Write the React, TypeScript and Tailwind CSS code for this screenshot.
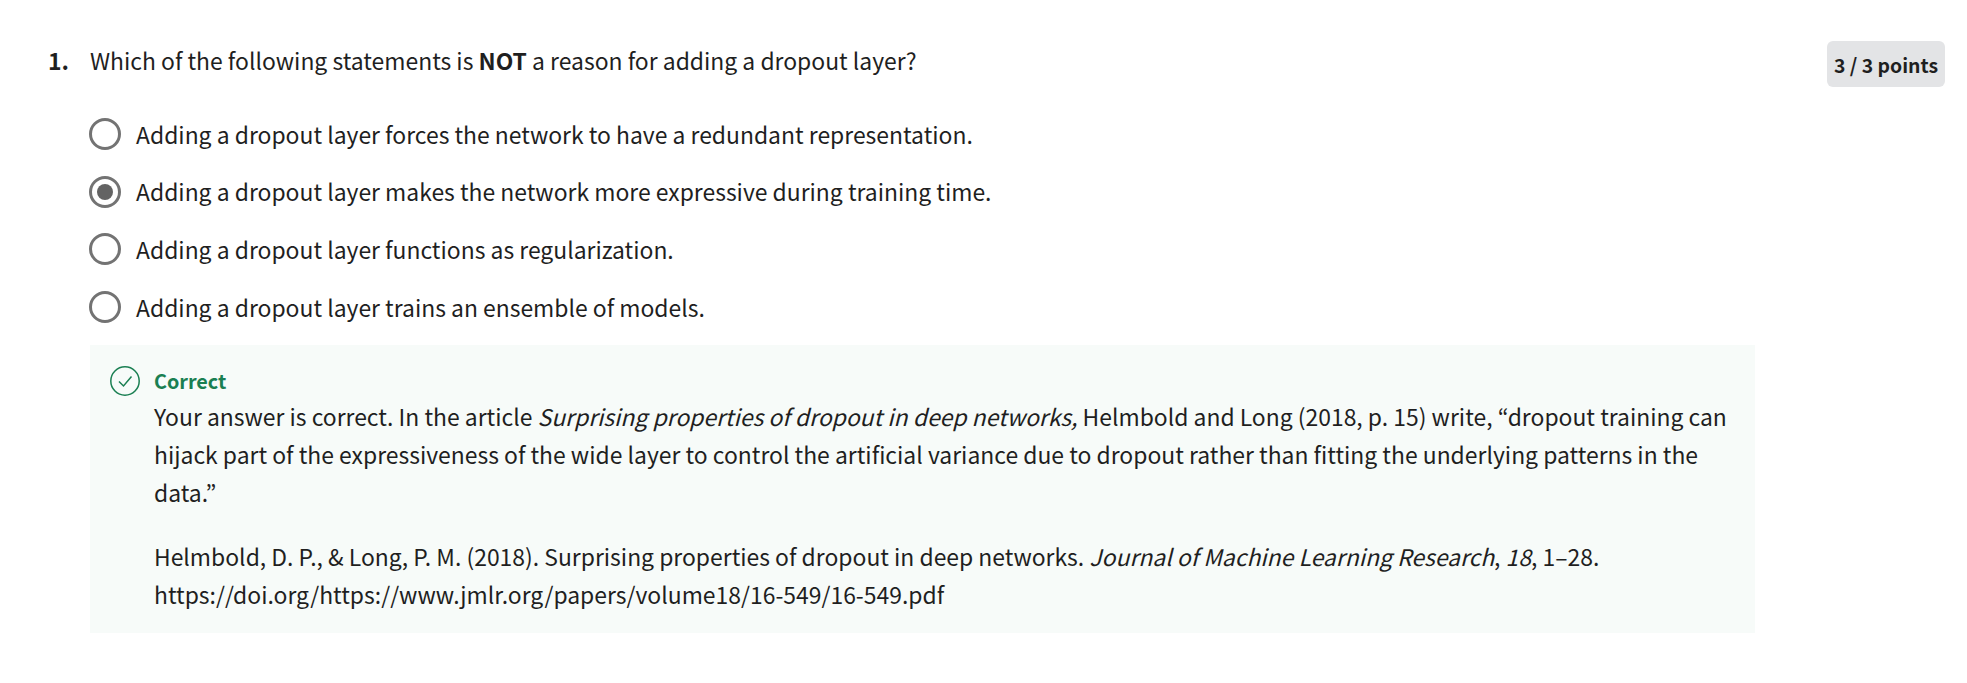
const font = { fontFamily: '"Noto Sans CJK JP", "Source Sans Pro", sans-serif' };

function Radio({ checked }: { checked?: boolean }) {
  return (
    <span className="-ml-[1px] flex h-[32px] w-[32px] shrink-0 items-center justify-center rounded-full border-[3.5px] border-[#737373] bg-white">
      {checked && <span className="h-[16px] w-[16px] rounded-full bg-[#636363]" />}
    </span>
  );
}

const options = [
  ["Adding a dropout layer forces the network to have a redundant representation.", false],
  ["Adding a dropout layer makes the network more expressive during training time.", true],
  ["Adding a dropout layer functions as regularization.", false],
  ["Adding a dropout layer trains an ensemble of models.", false],
] as const;

export default function App() {
  return (
    <div className="h-[683px] w-[1967px] overflow-hidden bg-white text-[#1f1f1f]" style={font}>
      <div className="flex items-start pl-[48px] pr-[22px] pt-[41px]">
        <div className="w-[42px] text-[22.92px] font-bold leading-[38px]">1.</div>
        <div className="w-[1665px] shrink-0">
          <p className="text-[22.92px] leading-[38px]">
            Which of the following statements is <b>NOT</b> a reason for adding a dropout layer?
          </p>
          <div className="mt-[36px] flex flex-col gap-[19.6px]">
            {options.map(([label, checked]) => (
              <div key={label} className="flex h-[38px] items-center gap-[15px] text-[22.92px]">
                <Radio checked={checked} />
                <span>{label}</span>
              </div>
            ))}
          </div>
          <div className="mt-[19px] flex h-[288px] bg-[#f7fbf9] pl-[20px] pr-[20px] pt-[20px]">
            <svg viewBox="0 0 30 30" className="mt-[1px] h-[30px] w-[30px] shrink-0" fill="none" stroke="#1a7f52" strokeWidth="1.5">
              <circle cx="15" cy="15" r="14.2" />
              <path d="M9 15.5 L13.5 20 L21.5 10.5" />
            </svg>
            <div className="ml-[14px]">
              <div className="text-[19.8px] font-bold leading-[32px] text-[#1a7f52]">Correct</div>
              <p className="text-[22.92px] leading-[38px]">
                Your answer is correct. In the article <i>Surprising properties of dropout in deep networks,</i> Helmbold and Long (2018, p. 15) write, “dropout training can hijack part of the expressiveness of the wide layer to control the artificial variance due to dropout rather than fitting the underlying patterns in the data.”
              </p>
              <p className="mt-[26px] text-[22.92px] leading-[38px]">
                Helmbold, D. P., &amp; Long, P. M. (2018). Surprising properties of dropout in deep networks. <i>Journal of Machine Learning Research</i>, <i>18</i>, 1–28. https://doi.org/https://www.jmlr.org/papers/volume18/16-549/16-549.pdf
              </p>
            </div>
          </div>
        </div>
        <div className="ml-auto flex h-[46px] w-[118px] shrink-0 items-center justify-center rounded-[6px] bg-[#e3e4e6] pt-[1px] text-[19.4px] font-bold">
          3 / 3 points
        </div>
      </div>
    </div>
  );
}
